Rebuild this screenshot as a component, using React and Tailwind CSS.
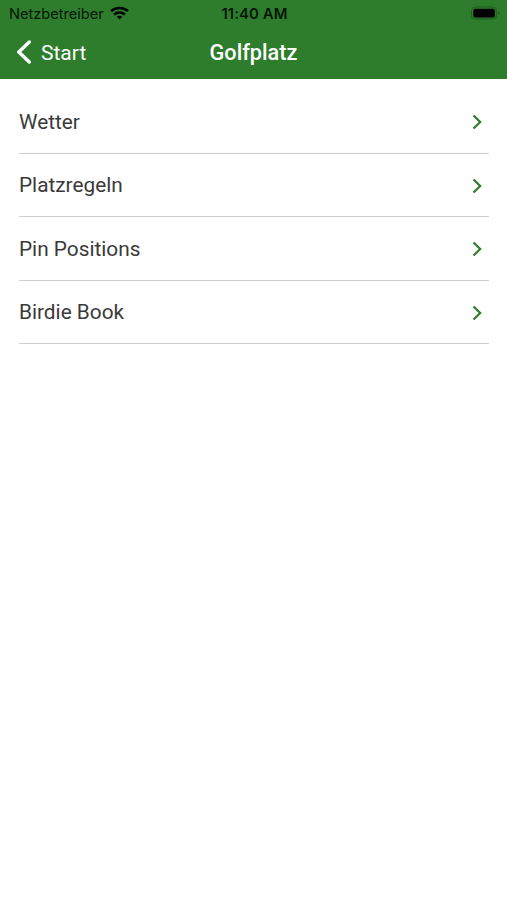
const items = ['Wetter', 'Platzregeln', 'Pin Positions', 'Birdie Book']

function StatusBar() {
  return (
    <div className="grid h-[27px] grid-cols-[1fr_auto_1fr] items-center pl-[9px] pr-[7px] pt-px font-[Inter,sans-serif] text-[14.6px] leading-none text-[#061606]">
      <div className="flex items-center gap-[6px]">
        <span>Netzbetreiber</span>
        <svg className="-mt-[2px]" width="19" height="14" viewBox="0 0 19 14" fill="none" stroke="#000" strokeWidth="2.5">
          <path d="M1 5.2C5.7.9 13.3.9 18 5.2" />
          <path d="M4.1 8.5c3-2.8 7.8-2.8 10.8 0" />
          <path d="M6.8 10.8 9.5 13.5l2.7-2.7c-1.5-1.4-3.9-1.4-5.4 0Z" fill="#000" stroke="none" />
        </svg>
      </div>
      <span className="text-[14.9px] font-semibold leading-[14px] tracking-[0.1px]">11:40 AM</span>
      <div className="flex justify-end">
        <svg className="-mt-[2px]" width="30" height="14" viewBox="0 0 30 14">
          <rect x="1.5" y="1" width="25" height="12" rx="3.5" fill="none" stroke="#1f5e1f" />
          <rect x="3.3" y="2.7" width="21.6" height="8.8" rx="1.8" fill="#000" />
          <path d="M28.2 5v4c1.7-.7 1.7-3.3 0-4Z" fill="#1f5e1f" />
        </svg>
      </div>
    </div>
  )
}

export default function App() {
  return (
    <div className="min-h-screen bg-white font-[Roboto,sans-serif]">
      <header className="h-[79px] bg-[#2d7d2d]">
        <StatusBar />
        <div className="grid h-[52px] grid-cols-[1fr_auto_1fr] items-center px-4 text-[21px] text-white">
          <button type="button" className="flex items-center gap-[9px] pt-px">
            <svg className="-mt-[3px]" width="16" height="24" viewBox="0 0 16 24" fill="none" stroke="currentColor" strokeWidth="3.4" strokeLinecap="round" strokeLinejoin="round">
              <path d="M13.3 2 2.8 12l10.5 10" />
            </svg>
            <span>Start</span>
          </button>
          <h1 className="text-[21.7px] font-medium">Golfplatz</h1>
        </div>
      </header>

      <ul className="pl-[19px] pr-[18px] pt-[11px]">
        {items.map((item) => (
          <li key={item} className="flex h-[63.6px] items-center justify-between border-b-[1.5px] border-[#cdcdcd] pr-[7px] pt-[2px] text-[20.8px] text-[#3a3a3a]">
            <span>{item}</span>
            <svg width="10" height="16" viewBox="0 0 10 16" fill="none" stroke="#2d7d2d" strokeWidth="2.2">
              <path d="m1.5 1.5 6.7 6.5-6.7 6.5" />
            </svg>
          </li>
        ))}
      </ul>
    </div>
  )
}
